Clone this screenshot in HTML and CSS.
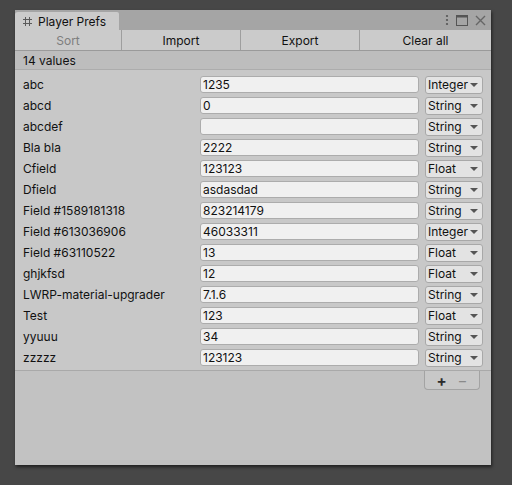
FILE: index.html
```html
<!DOCTYPE html>
<html>
<head>
<meta charset="utf-8">
<link rel="stylesheet" href="styles.css">
</head>
<body>
<div class="window">
  <div class="tabbar">
    <div class="tab">
      <svg class="tab-icon" width="9" height="9" viewBox="0 0 9 9"><path d="M2.5 0V9M6.5 0V9M0 2.5H9M0 6.5H9" stroke="#5a5a5a" stroke-width="1" fill="none"/></svg>
      <span>Player Prefs</span>
    </div>
    <div class="tab-tools">
      <svg width="4" height="12" viewBox="0 0 4 12"><circle cx="2" cy="2" r="1.1" fill="#555"/><circle cx="2" cy="6" r="1.1" fill="#555"/><circle cx="2" cy="10" r="1.1" fill="#555"/></svg>
      <svg width="12" height="11" viewBox="0 0 12 11"><rect x="0.5" y="0.5" width="11" height="10" fill="none" stroke="#555"/><rect x="0.5" y="0.5" width="11" height="2" fill="#555"/></svg>
      <svg width="11" height="11" viewBox="0 0 11 11"><path d="M1 1L10 10M10 1L1 10" stroke="#666" stroke-width="1.4"/></svg>
    </div>
  </div>
  <div class="toolbar">
    <div class="tbtn disabled b1">Sort</div>
    <div class="tbtn b2">Import</div>
    <div class="tbtn b3">Export</div>
    <div class="tbtn b4">Clear all</div>
  </div>
  <div class="header">14 values</div>
  <div class="list">
    <div class="row"><span class="label">abc</span><div class="field">1235</div><div class="dd">Integer<i></i></div></div>
    <div class="row"><span class="label">abcd</span><div class="field">0</div><div class="dd">String<i></i></div></div>
    <div class="row"><span class="label">abcdef</span><div class="field"></div><div class="dd">String<i></i></div></div>
    <div class="row"><span class="label">Bla bla</span><div class="field">2222</div><div class="dd">String<i></i></div></div>
    <div class="row"><span class="label">Cfield</span><div class="field">123123</div><div class="dd">Float<i></i></div></div>
    <div class="row"><span class="label">Dfield</span><div class="field">asdasdad</div><div class="dd">String<i></i></div></div>
    <div class="row"><span class="label">Field #1589181318</span><div class="field">823214179</div><div class="dd">String<i></i></div></div>
    <div class="row"><span class="label">Field #613036906</span><div class="field">46033311</div><div class="dd">Integer<i></i></div></div>
    <div class="row"><span class="label">Field #63110522</span><div class="field">13</div><div class="dd">Float<i></i></div></div>
    <div class="row"><span class="label">ghjkfsd</span><div class="field">12</div><div class="dd">Float<i></i></div></div>
    <div class="row"><span class="label">LWRP-material-upgrader</span><div class="field">7.1.6</div><div class="dd">String<i></i></div></div>
    <div class="row"><span class="label">Test</span><div class="field">123</div><div class="dd">Float<i></i></div></div>
    <div class="row"><span class="label">yyuuu</span><div class="field">34</div><div class="dd">String<i></i></div></div>
    <div class="row"><span class="label">zzzzz</span><div class="field">123123</div><div class="dd">String<i></i></div></div>
  </div>
  <div class="footer">
    <div class="pm"><span class="plus">+</span><span class="minus">−</span></div>
  </div>
</div>
</body>
</html>
```
FILE: styles.css
```css
html, body {
  margin: 0;
  padding: 0;
  background: #474747;
  font-family: Inter, "Noto Sans", sans-serif;
  font-size: 12px;
  color: #111;
}
body {
  width: 512px;
  height: 485px;
  overflow: hidden;
  padding-top: 10px;
  box-sizing: border-box;
}
.window {
  margin-left: 15px;
  width: 476px;
  height: 455px;
  background: #c2c2c2;
  box-shadow: 1px 2px 3px rgba(0,0,0,0.55);
  display: flex;
  flex-direction: column;
}
.tabbar {
  height: 20px;
  background: #a5a5a5;
  display: flex;
  align-items: flex-end;
  justify-content: space-between;
}
.tab {
  width: 104px;
  height: 18px;
  background: #cbcbcb;
  border-top-left-radius: 3px;
  border-top-right-radius: 2px;
  display: flex;
  align-items: center;
  box-sizing: border-box;
  padding-left: 8px;
  font-size: 12px;
  color: #101010;
}
.tab-icon { margin-right: 6px; }
.tab-tools {
  display: flex;
  align-items: center;
  gap: 7px;
  height: 20px;
  padding-right: 5px;
}
.toolbar {
  height: 20px;
  display: flex;
  background: #cbcbcb;
  border-bottom: 1px solid #9a9a9a;
  box-sizing: content-box;
}
.tbtn {
  display: flex;
  align-items: center;
  justify-content: center;
  border-right: 1px solid #9e9e9e;
  box-sizing: border-box;
  color: #111;
}
.tbtn.b1 { width: 107px; }
.tbtn.b2 { width: 119px; }
.tbtn.b3 { width: 119px; }
.tbtn.b4 { flex: 1; border-right: none; }
.tbtn.disabled { color: #7e7e7e; }
.header {
  height: 18px;
  background: #bdbdbd;
  border-bottom: 1px solid #acacac;
  display: flex;
  align-items: center;
  padding-left: 8px;
  color: #111;
}
.list {
  background: #c8c8c8;
  border-bottom: 1px solid #a9a9a9;
  padding-top: 4px;
  padding-bottom: 2px;
  display: flex;
  flex-direction: column;
}
.row {
  height: 21px;
  display: flex;
  align-items: center;
}
.label {
  width: 177px;
  padding-left: 8px;
  color: #111;
  white-space: nowrap;
}
.field {
  width: 219px;
  height: 17px;
  box-sizing: border-box;
  background: #f0f0f0;
  border: 1px solid #acacac;
  border-radius: 3px;
  padding-left: 2px;
  line-height: 15px;
  color: #111;
}
.dd {
  margin-left: 6px;
  width: 58px;
  height: 18px;
  box-sizing: border-box;
  background: #e3e3e3;
  border: 1px solid #a8a8a8;
  border-radius: 3px;
  padding-left: 2px;
  line-height: 16px;
  position: relative;
  color: #111;
}
.dd i {
  position: absolute;
  right: 4px;
  top: 6px;
  width: 0;
  height: 0;
  border-left: 4px solid transparent;
  border-right: 4px solid transparent;
  border-top: 4px solid #555;
}
.footer {
  display: flex;
  justify-content: flex-end;
  padding-right: 11px;
}
.pm {
  width: 56px;
  height: 19px;
  box-sizing: border-box;
  border: 1px solid #a3a3a3;
  border-top: none;
  border-bottom-left-radius: 4px;
  border-bottom-right-radius: 4px;
  background: #c8c8c8;
  display: flex;
  align-items: center;
  justify-content: space-around;
  padding: 0 6px;
  font-size: 15px;
  font-weight: bold;
}
.plus { color: #2b2b2b; }
.minus { color: #8a8a8a; font-weight: normal; }
```
